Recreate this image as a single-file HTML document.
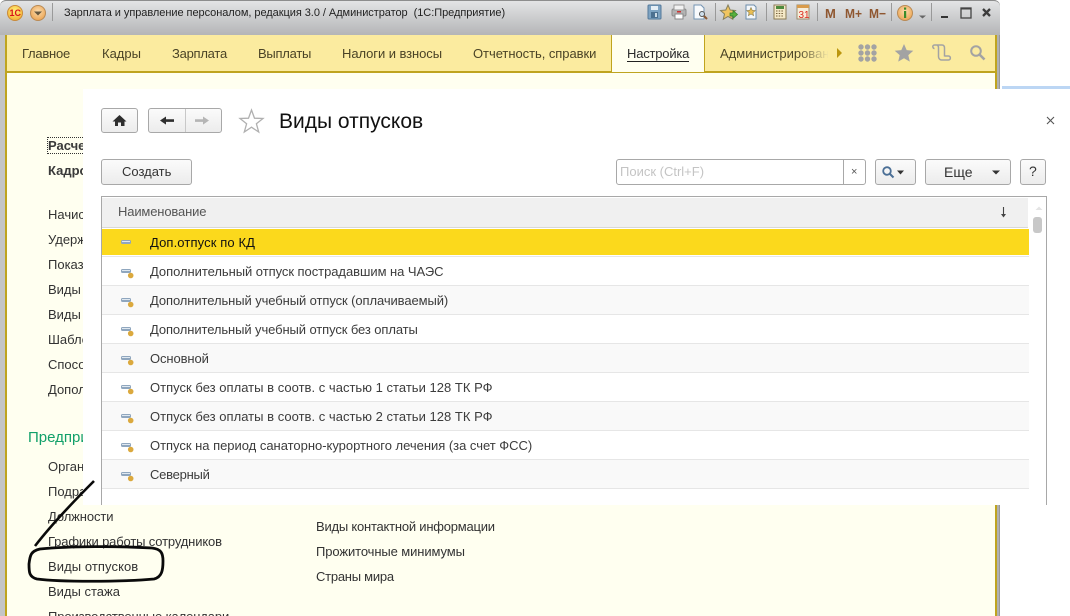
<!DOCTYPE html>
<html lang="ru"><head><meta charset="utf-8"><title>Виды отпусков</title>
<style>
html,body{margin:0;padding:0;background:#fff}
#p{position:relative;width:1070px;height:616px;overflow:hidden;background:#fff;font-family:"Liberation Sans",Arial,sans-serif;font-size:13px;color:#333}
#p div,#p span.t{position:absolute;white-space:nowrap}
.t{line-height:14px;letter-spacing:0}
.tab{top:47px;color:#4a4326;font-size:13px}
.bt{background:linear-gradient(#fbfbfb,#ececec);border:1px solid #a8a8a8;border-radius:3px;box-sizing:border-box}
.r{left:102px;width:927px;height:29px;box-sizing:border-box;border-bottom:1px solid #e6e6e6}
.r.g{background:#f9f9f9}
.rt{left:150px;color:#3c3c3c}
svg{position:absolute;left:0;top:0}
</style></head><body><div id="p">
<div style="left:0;top:0;width:1000px;height:616px;background:linear-gradient(90deg,#c4c5c6,#b0b1b3);border-radius:6px 6px 0 0;border-right:1px solid #999;box-sizing:border-box"></div>
<div style="left:0;top:0;width:1000px;height:35px;background:linear-gradient(#e3e4e5,#b4b5b7);border-radius:6px 6px 0 0;border-top:1px solid #8d8d8d;box-sizing:border-box"></div>
<div style="left:6px;top:35px;width:990px;height:37px;background:#fbeb9f"></div>
<div style="left:6px;top:71px;width:990px;height:2px;background:#bfa41f"></div>
<div style="left:5px;top:35px;width:2px;height:581px;background:#bfa41f"></div>
<div style="left:995px;top:35px;width:2px;height:581px;background:#bfa41f"></div>
<div style="left:7px;top:73px;width:988px;height:543px;background:#fffff0"></div>
<div style="left:611px;top:35px;width:94px;height:37px;background:#fffff0;border:solid #bfa41f;border-width:0 1px;box-sizing:border-box"></div>

<span class="t" style="left:64px;top:6px;font-size:11px;letter-spacing:-.05px;color:#222">Зарплата и управление персоналом, редакция 3.0 / Администратор&nbsp; (1С:Предприятие)</span>

<span class="t tab" style="left:22px;letter-spacing:-.25px">Главное</span>
<span class="t tab" style="left:102px">Кадры</span>
<span class="t tab" style="left:172px;letter-spacing:-.25px">Зарплата</span>
<span class="t tab" style="left:258px;letter-spacing:-.25px">Выплаты</span>
<span class="t tab" style="left:342px;letter-spacing:-.07px">Налоги и взносы</span>
<span class="t tab" style="left:473px;letter-spacing:-.05px">Отчетность, справки</span>
<span class="t tab" style="left:627px;color:#2b2b2b;border-bottom:1px solid #222;letter-spacing:-.2px">Настройка</span>
<span class="t tab" style="left:720px;width:108px;overflow:hidden;background:linear-gradient(90deg,#4a4326 72%,#f3e6a4 100%);-webkit-background-clip:text;background-clip:text;color:transparent">Администрирован</span>

<!-- left nav -->
<div style="left:47px;top:137px;width:36px;height:17px;box-sizing:border-box;border:1px dotted #333;border-right:0"></div>
<span class="t" style="left:48px;top:139px;font-weight:bold;color:#3a3a3a">Расчет</span>
<span class="t" style="left:48px;top:164px;font-weight:bold;color:#3a3a3a">Кадровый</span>
<span class="t" style="left:48px;top:208px">Начисления</span>
<span class="t" style="left:48px;top:233px">Удержания</span>
<span class="t" style="left:48px;top:258px">Показатели</span>
<span class="t" style="left:48px;top:283px">Виды</span>
<span class="t" style="left:48px;top:308px">Виды</span>
<span class="t" style="left:48px;top:333px">Шаблоны</span>
<span class="t" style="left:48px;top:358px">Способы</span>
<span class="t" style="left:48px;top:383px">Дополнительно</span>
<span class="t" style="left:28px;top:430px;font-size:15px;color:#12a06a;line-height:16px">Предприятие</span>
<span class="t" style="left:48px;top:460px">Организации</span>
<span class="t" style="left:48px;top:485px">Подразделения</span>
<span class="t" style="left:48px;top:510px;letter-spacing:-.1px">Должности</span>
<span class="t" style="left:48px;top:535px;letter-spacing:-.15px">Графики работы сотрудников</span>
<span class="t" style="left:48px;top:560px;letter-spacing:.08px">Виды отпусков</span>
<span class="t" style="left:48px;top:585px">Виды стажа</span>
<span class="t" style="left:48px;top:610px;letter-spacing:-.1px">Производственные календари</span>
<span class="t" style="left:316px;top:520px;letter-spacing:-.22px">Виды контактной информации</span>
<span class="t" style="left:316px;top:545px;letter-spacing:-.1px">Прожиточные минимумы</span>
<span class="t" style="left:316px;top:570px;letter-spacing:-.25px">Страны мира</span>

<!-- modal -->
<div style="left:1002px;top:86px;width:68px;height:3px;background:#bcd6f4"></div>
<div style="left:83px;top:89px;width:987px;height:416px;background:#fff"></div>
<div class="bt" style="left:101px;top:108px;width:37px;height:25px"></div>
<div class="bt" style="left:148px;top:108px;width:74px;height:25px"></div>
<div style="left:185px;top:109px;width:1px;height:23px;background:#c8c8c8"></div>
<span class="t" style="left:279px;top:110px;font-size:21px;line-height:24px;color:#111">Виды отпусков</span>

<div class="bt" style="left:101px;top:159px;width:91px;height:26px"></div>
<span class="t" style="left:122px;top:165px;color:#333">Создать</span>
<div style="left:616px;top:159px;width:250px;height:26px;box-sizing:border-box;border:1px solid #a8a8a8;border-radius:3px;background:#fff"></div>
<div style="left:843px;top:160px;width:1px;height:24px;background:#a8a8a8"></div>
<span class="t" style="left:620px;top:165px;color:#c4c4c4">Поиск (Ctrl+F)</span>
<span class="t" style="left:851px;top:165px;color:#555;font-size:11px">×</span>
<div class="bt" style="left:875px;top:159px;width:41px;height:26px"></div>
<div class="bt" style="left:925px;top:159px;width:86px;height:26px"></div>
<span class="t" style="left:944px;top:165px;color:#333;font-size:14px">Еще</span>
<div class="bt" style="left:1020px;top:159px;width:26px;height:26px"></div>
<span class="t" style="left:1029px;top:164px;color:#333;font-size:14px">?</span>

<!-- table -->
<div style="left:101px;top:196px;width:946px;height:309px;box-sizing:border-box;border:solid #a8a8a8;border-width:1px 1px 0 1px;background:#fff"></div>
<div style="left:102px;top:198px;width:926px;height:29px;background:#f0f0f0;border-bottom:1px solid #d8d8d8;box-sizing:content-box"></div>
<span class="t" style="left:118px;top:205px;color:#555;letter-spacing:-.15px">Наименование</span>
<div style="left:102px;top:229px;width:927px;height:26px;background:#fbd91c"></div>
<div style="left:102px;top:256px;width:927px;height:1px;background:#e6e6e6"></div>
<div class="r" style="top:257px"></div>
<div class="r g" style="top:286px"></div>
<div class="r" style="top:315px"></div>
<div class="r g" style="top:344px"></div>
<div class="r" style="top:373px"></div>
<div class="r g" style="top:402px"></div>
<div class="r" style="top:431px"></div>
<div class="r g" style="top:460px"></div>
<span class="t rt" style="top:236px;color:#111;letter-spacing:.12px">Доп.отпуск по КД</span>
<span class="t rt" style="top:265px;letter-spacing:-.05px">Дополнительный отпуск пострадавшим на ЧАЭС</span>
<span class="t rt" style="top:294px;letter-spacing:-.09px">Дополнительный учебный отпуск (оплачиваемый)</span>
<span class="t rt" style="top:323px;letter-spacing:-.1px">Дополнительный учебный отпуск без оплаты</span>
<span class="t rt" style="top:352px;letter-spacing:-.1px">Основной</span>
<span class="t rt" style="top:381px;letter-spacing:.02px">Отпуск без оплаты в соотв. с частью 1 статьи 128 ТК РФ</span>
<span class="t rt" style="top:410px;letter-spacing:.02px">Отпуск без оплаты в соотв. с частью 2 статьи 128 ТК РФ</span>
<span class="t rt" style="top:439px;letter-spacing:-.02px">Отпуск на период санаторно-курортного лечения (за счет ФСС)</span>
<span class="t rt" style="top:468px;letter-spacing:-.25px">Северный</span>
<div style="left:1033px;top:217px;width:9px;height:16px;background:#c8c8c8;border-radius:3px"></div>

<svg width="1070" height="616" viewBox="0 0 1070 616">
<defs>
<g id="ri"><rect x="121" y="0" width="10" height="4" rx="1.500" fill="#8fa6be"/><rect x="122" y="1" width="8" height="1" fill="#dfe8f0"/><circle cx="130.700" cy="6.500" r="2.800" fill="#dba93e"/></g>
<radialGradient id="yl" cx=".5" cy=".35" r=".7"><stop offset="0" stop-color="#fff27a"/><stop offset="1" stop-color="#f2a92e"/></radialGradient>
<radialGradient id="or" cx=".5" cy=".4" r=".7"><stop offset="0" stop-color="#fbdcae"/><stop offset="1" stop-color="#e99c45"/></radialGradient>
</defs>
<!-- title left icons -->
<circle cx="15" cy="13" r="7.500" fill="url(#yl)" stroke="#c98a3a"/>
<text x="9.500" y="16" font-family="Liberation Sans" font-size="9" font-weight="bold" fill="#d8131a">1С</text>
<circle cx="38" cy="13" r="7.500" fill="url(#or)" stroke="#b98a55"/>
<path d="M34 11.500h8l-4 4z" fill="#66583f"/>
<rect x="52" y="3" width="1" height="18" fill="#9a9a9a"/>
<!-- title toolbar -->
<g fill="none">
<rect x="648" y="5" width="13" height="14" rx="1" fill="#7ea3c2" stroke="#54799a"/><rect x="651" y="6" width="7" height="4" fill="#e5eef5"/><rect x="651" y="12" width="7" height="6" fill="#4c7090"/><rect x="655" y="13" width="2" height="4" fill="#cddbe6"/>
<rect x="672" y="9" width="14" height="7" rx="1.500" fill="#b3b3b3" stroke="#8b8b8b"/><rect x="674" y="5" width="10" height="5" fill="#f2f2f2" stroke="#999"/><rect x="675" y="14" width="8" height="5" fill="#fff" stroke="#888"/><rect x="677" y="11" width="4" height="1.500" fill="#c33"/>
<path d="M694 5h7l3 3v11h-10z" fill="#f8fafc" stroke="#7595b4"/><circle cx="702" cy="14" r="2.500" fill="#cfe0ee" stroke="#555"/><path d="M704 16l3 3" stroke="#8a5a34" stroke-width="2"/>
<rect x="715" y="3" width="1" height="18" fill="#999"/>
<path d="M728 5l2.200 5 5.300.5-4 3.500 1.200 5.200-4.700-2.800-4.700 2.800 1.200-5.200-4-3.500 5.300-.5z" fill="#f1c560" stroke="#87805c"/><path d="M730 13h3v-2.500l4.500 4-4.500 4v-2.500h-3z" fill="#59b03c" stroke="#2f7a2a" stroke-width=".7"/>
<path d="M746 5h8l2 2v12h-10z" fill="#f4f7fa" stroke="#6d8dab"/><path d="M751 7.500l1.200 2.800 3 .3-2.300 2 .7 3-2.600-1.600-2.600 1.600.7-3-2.300-2 3-.3z" fill="#eabf55" stroke="#8b7d4a" stroke-width=".6"/>
<rect x="766" y="3" width="1" height="18" fill="#999"/>
<rect x="774" y="5" width="12" height="14" fill="#f5e9c8" stroke="#8b7b55"/><rect x="776" y="6" width="8" height="3" fill="#4e8a3c"/><path d="M776 11h8M776 13.500h8M776 16h8" stroke="#76603a" stroke-dasharray="1.500 1.200"/>
<rect x="797" y="5" width="12" height="14" fill="#f7eedb" stroke="#9a8c6c"/><rect x="797" y="5" width="12" height="3" fill="#d99b4b"/>
<text x="798.500" y="18" font-family="Liberation Sans" font-size="10" fill="#dc2a1d">31</text>
<rect x="817" y="3" width="1" height="18" fill="#999"/>
</g>
<g font-family="Liberation Sans" font-size="13" font-weight="bold" fill="#8f5731">
<text x="825" y="18">M</text><text x="845" y="18" textLength="17" lengthAdjust="spacingAndGlyphs">M+</text><text x="869" y="18" textLength="17" lengthAdjust="spacingAndGlyphs">M−</text>
</g>
<rect x="891" y="3" width="1" height="18" fill="#999"/>
<circle cx="905" cy="13" r="7.500" fill="url(#or)" stroke="#b98a55"/>
<rect x="904" y="7.500" width="2.200" height="2.200" fill="#3a8d2a"/><rect x="904" y="11" width="2.200" height="7" fill="#3a8d2a"/>
<path d="M919 15.500h7l-3.500 3z" fill="#666"/>
<rect x="931" y="3" width="1" height="18" fill="#999"/>
<rect x="941" y="16" width="7" height="2" fill="#333"/>
<rect x="961" y="8" width="10" height="10" fill="none" stroke="#444" stroke-width="1.300"/><rect x="961" y="8" width="10" height="1.500" fill="#444"/>
<path d="M983 9l7 7M990 9l-7 7" stroke="#3c3c3c" stroke-width="2.300"/>
<!-- right tabs -->
<path d="M837 48l5 5-5 5z" fill="#bb960f"/>
<g fill="#a3a3a3">
<circle cx="861" cy="47" r="2.700"/><circle cx="867.500" cy="47" r="2.700"/><circle cx="874" cy="47" r="2.700"/>
<circle cx="861" cy="53" r="2.700"/><circle cx="867.500" cy="53" r="2.700"/><circle cx="874" cy="53" r="2.700"/>
<circle cx="861" cy="59" r="2.700"/><circle cx="867.500" cy="59" r="2.700"/><circle cx="874" cy="59" r="2.700"/>
<path d="M904 44l2.700 6.100 6.600.6-5 4.400 1.500 6.500-5.800-3.400-5.800 3.400 1.500-6.500-5-4.400 6.600-.6z"/>
</g>
<path d="M934.500 48.500c-2 0-2.500-3.500 0-3.500h7.500c2 0 2.500 1.500 2.500 3v8.500M936.500 45c1.500 0 2 1.500 2 3v8.500c0 1.500 1 3.500 3 3.500h7c2.500 0 2.500-4 0-4h-4" fill="none" stroke="#a3a3a3" stroke-width="1.500"/>
<circle cx="976" cy="51" r="4.800" fill="none" stroke="#a3a3a3" stroke-width="2"/><path d="M979.500 54.500l5 5" stroke="#a3a3a3" stroke-width="2.600"/>
<!-- home -->
<path d="M119.500 115l7 6.500h-2v4.500h-3.500v-3.500h-3v3.500H115v-4.500h-2.500z" fill="#2e2e2e"/>
<!-- arrows -->
<path d="M160 120.500l6-4v2.800h8v2.600h-8v2.700z" fill="#2e2e2e"/>
<path d="M209 120.500l-6-4v2.800h-8v2.600h8v2.700z" fill="#b5b5b5"/>
<!-- star -->
<path d="M251.500 110l3 8.200 8.500.3-6.600 5.300 2.300 8.200-7.200-4.800-7.200 4.800 2.300-8.200-6.600-5.300 8.500-.3z" fill="#fff" stroke="#b0b0b0" stroke-width="1.300"/>
<!-- close -->
<path d="M1047 117l7 7M1054 117l-7 7" stroke="#555" stroke-width="1.100"/>
<!-- search -->
<circle cx="887" cy="171" r="3.800" fill="none" stroke="#4b6f96" stroke-width="1.800"/><path d="M890 174l3.500 3.500" stroke="#4b6f96" stroke-width="2"/>
<path d="M897 170.500h7l-3.500 4z" fill="#333"/>
<path d="M992 170.500h8l-4 4z" fill="#333"/>
<!-- sort -->
<path d="M1003.500 207v9" stroke="#444" stroke-width="1.100"/><path d="M1001 214h5l-2.500 3.500z" fill="#444"/>
<path d="M1035 209h7l-3.500-3.500z" fill="#e4e4e4" transform="translate(.5 1)"/>
<!-- row icons -->
<rect x="121" y="240" width="10" height="4" rx="1.500" fill="#8fa6be"/><rect x="122" y="241" width="8" height="1" fill="#dfe8f0"/>
<use href="#ri" y="269"/><use href="#ri" y="298"/><use href="#ri" y="327"/><use href="#ri" y="356"/><use href="#ri" y="385"/><use href="#ri" y="414"/><use href="#ri" y="443"/><use href="#ri" y="472"/>
<!-- hand annotation -->
<path d="M94 481C78 497 52 524 35 546" fill="none" stroke="#0a0a0a" stroke-width="2.600"/>
<path d="M40 549C70 546 120 546 152 548C161 549 163 553 163 561C163 570 162 577 154 579C120 582 60 582 37 579C29 577 29 572 29 564C30 555 31 551 40 549Z" fill="none" stroke="#0a0a0a" stroke-width="2.800"/>
</svg>
</div></body></html>
